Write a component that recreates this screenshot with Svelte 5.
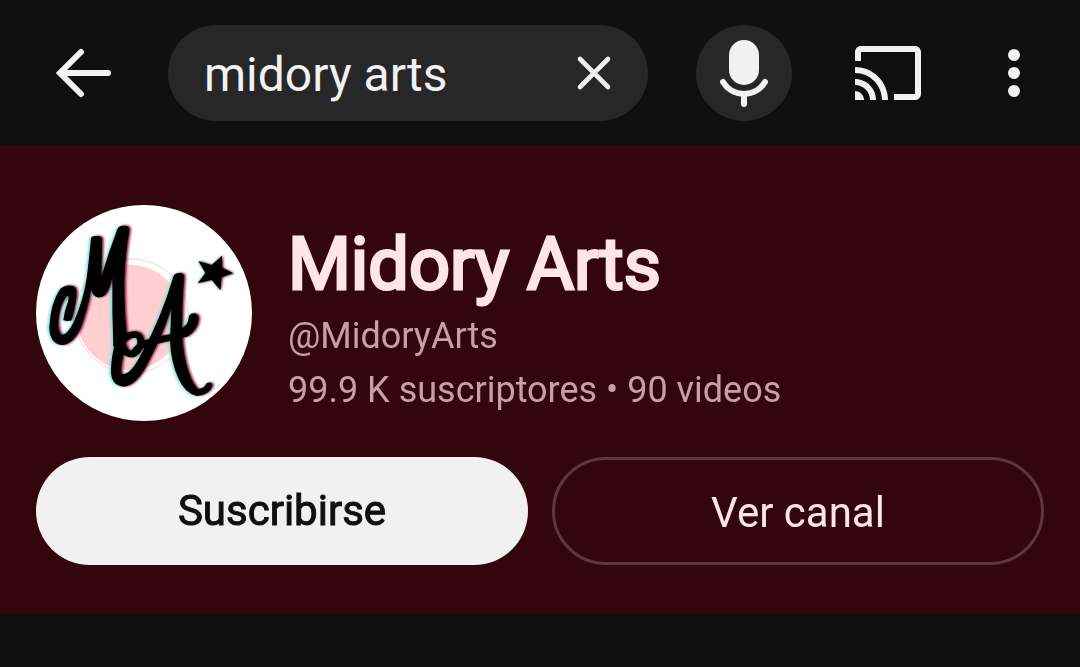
<script>
  let query = $state('midory arts');
</script>

<div class="page">
  <header class="bar">
    <button class="icon" aria-label="Atrás">
      <svg viewBox="0 0 72 72" fill="none" stroke="currentColor" stroke-width="6" stroke-linecap="round">
        <path d="M33 15 12 36l21 21M13 36h47" />
      </svg>
    </button>

    <div class="search">
      <input type="text" aria-label="Buscar" bind:value={query} />
      <button class="icon" aria-label="Borrar" onclick={() => (query = '')}>
        <svg viewBox="0 0 72 72" fill="none" stroke="currentColor" stroke-width="4.6" stroke-linecap="round">
          <path d="M22 22l28 28M50 22 22 50" />
        </svg>
      </button>
    </div>

    <button class="mic" aria-label="Búsqueda por voz">
      <svg viewBox="0 0 96 96">
        <rect x="33" y="15" width="30" height="45" rx="15" fill="currentColor" />
        <path d="M27 57a24.4 24.4 0 0 0 42 0M48 70v9" fill="none" stroke="currentColor" stroke-width="6" stroke-linecap="round" />
      </svg>
    </button>

    <div class="actions">
      <button class="icon" aria-label="Transmitir">
        <svg viewBox="0 0 24 24" fill="currentColor">
          <path d="M21 3H3c-1.1 0-2 .9-2 2v3h2V5h18v14h-7v2h7c1.1 0 2-.9 2-2V5c0-1.1-.9-2-2-2zM1 18v3h3c0-1.66-1.34-3-3-3zm0-4v2c2.76 0 5 2.24 5 5h2c0-3.87-3.13-7-7-7zm0-4v2c4.97 0 9 4.03 9 9h2c0-6.08-4.93-11-11-11z" />
        </svg>
      </button>
      <button class="icon" aria-label="Más opciones">
        <svg viewBox="0 0 24 24" fill="currentColor">
          <circle cx="12" cy="6" r="2" /><circle cx="12" cy="12" r="2" /><circle cx="12" cy="18" r="2" />
        </svg>
      </button>
    </div>
  </header>

  <main class="channel">
    <div class="profile">
      <svg class="avatar" viewBox="18 15 648 648" aria-hidden="true">
        <defs>
          <filter id="soft" x="-10%" y="-10%" width="120%" height="120%"><feGaussianBlur stdDeviation="2.5" /></filter>
          <filter id="edge" x="-10%" y="-10%" width="120%" height="120%"><feGaussianBlur stdDeviation="1.2" /></filter>
          <g id="brush">
            <path stroke="none" d="M183 116Q184 107 199 108Q217 107 216 120L214 230Q235 160 262 88Q266 76 282 77Q298 77 298 90Q286 160 283 240Q282 330 290 400L282 430L250 440Q246 340 247 232Q240 268 226 284Q216 294 203 292Q188 290 184 268Q172 330 152 385Q126 436 95 435Q58 430 58 380Q62 310 90 268Q108 252 130 259Q142 264 139 290Q134 330 124 361Q112 366 100 360Q104 330 114 305Q118 288 112 286Q92 310 86 350Q80 395 96 405Q118 402 140 345Q162 290 170 235Q178 170 183 116Z" />
            <path stroke="none" d="M430 230Q434 219 447 219Q463 218 462 232Q456 310 456 380Q456 440 468 490Q482 545 503 567Q521 568 530 550Q545 543 547 556Q540 585 500 588Q465 580 445 535Q422 485 420 420L424 325Q400 400 355 486Q320 558 280 560Q242 556 243 510Q244 465 258 420L288 440Q270 495 274 522Q300 530 335 460Q395 350 430 230Z" />
            <g fill="none" stroke-linecap="round" stroke-linejoin="round">
              <path stroke-width="20" d="M270 436C290 398 322 398 329 412C338 430 325 456 308 462C290 464 282 450 278 436M314 455C335 425 370 425 410 415C435 409 455 408 470 397" />
              <path stroke-width="30" d="M466 396C482 386 490 373 491 355" />
            </g>
          </g>
          <path id="star" d="M576 167 577 203 610 220 575 232 571 271 545 240 503 250 526 219 505 183 545 195Z" />
        </defs>
        <circle cx="342" cy="339" r="324" fill="#fff" />
        <circle cx="299" cy="352" r="158" fill="#ffced0" />
        <circle cx="305" cy="348" r="171" fill="none" stroke="#f9d3d5" stroke-width="3" />
        <g filter="url(#soft)">
          <use href="#brush" fill="#7fe5da" stroke="#7fe5da" x="-6" y="1" />
          <use href="#brush" fill="#7d0c34" stroke="#7d0c34" x="5" y="-1" />
          <use href="#star" fill="#7fe5da" x="-3" />
          <use href="#star" fill="#7d0c34" x="3" />
        </g>
        <g filter="url(#edge)">
          <use href="#brush" fill="#000" stroke="#000" />
          <use href="#star" fill="#000" />
        </g>
      </svg>
      <div class="info">
        <h1>Midory Arts</h1>
        <p>@MidoryArts</p>
        <p>99.9 K suscriptores • 90 videos</p>
      </div>
    </div>

    <div class="buttons">
      <button class="pill subscribe">Suscribirse</button>
      <button class="pill view">Ver canal</button>
    </div>
  </main>
</div>

<style>
  :global(body) {
    margin: 0;
    background: #0f0f0f;
  }

  .page {
    font-family: Roboto, 'Liberation Sans', sans-serif;
    color: #f1f1f1;
  }

  button {
    padding: 0;
    border: 0;
    background: none;
    color: inherit;
    font: inherit;
    cursor: pointer;
  }

  svg {
    display: block;
  }

  .bar {
    display: flex;
    align-items: center;
    gap: 48px;
    padding: 25px 30px 24px 48px;
  }

  .icon {
    flex: none;
    width: 72px;
    height: 72px;
  }

  .search {
    flex: 1;
    min-width: 0;
    display: flex;
    align-items: center;
    height: 96px;
    padding: 0 18px 0 36px;
    box-sizing: border-box;
    border-radius: 48px;
    background: #272727;
  }

  .search input {
    flex: 1;
    min-width: 0;
    padding: 4px 0 0;
    border: 0;
    outline: 0;
    background: none;
    color: inherit;
    font: 400 48px/60px Roboto, 'Liberation Sans', sans-serif;
  }

  .mic {
    flex: none;
    width: 96px;
    height: 96px;
    border-radius: 50%;
    background: #272727;
  }

  .actions {
    display: flex;
    gap: 54px;
    padding-left: 12px;
  }

  .channel {
    padding: 60px 36px 48px;
    background: #33050d;
  }

  .profile {
    display: flex;
    gap: 36px;
  }

  .avatar {
    flex: none;
    width: 216px;
    height: 216px;
  }

  .info {
    min-width: 0;
    padding-top: 18px;
  }

  h1 {
    margin: 0 0 2px;
    color: #ffe5e8;
    font-size: 72px;
    font-weight: 400;
    line-height: 84px;
    -webkit-text-stroke: 3px currentColor;
  }

  p {
    margin: 0;
    color: #c99fa5;
    font-size: 36px;
    line-height: 54px;
  }

  .buttons {
    display: grid;
    grid-template-columns: 1fr 1fr;
    gap: 24px;
    margin-top: 36px;
  }

  .pill {
    height: 108px;
    box-sizing: border-box;
    border-radius: 54px;
    font-size: 42px;
    line-height: 48px;
  }

  .subscribe {
    background: #f1f1f1;
    color: #0f0f0f;
    -webkit-text-stroke: 1px currentColor;
  }

  .view {
    padding-top: 4px;
    border: 3px solid #5e373d;
    color: #ffe5e8;
  }
</style>
